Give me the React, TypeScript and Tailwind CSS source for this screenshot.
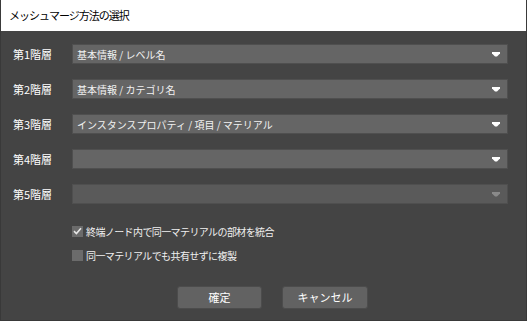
import React from 'react';

const LEVELS = [
  { label: '第1階層', value: '基本情報 / レベル名', disabled: false },
  { label: '第2階層', value: '基本情報 / カテゴリ名', disabled: false },
  { label: '第3階層', value: 'インスタンスプロパティ / 項目 / マテリアル', disabled: false },
  { label: '第4階層', value: '', disabled: false },
  { label: '第5階層', value: '', disabled: true },
];

function Arrow({ disabled }: { disabled: boolean }) {
  return (
    <svg width="8" height="5" viewBox="0 0 8 5" className={disabled ? 'text-[#8a8a8a]' : 'text-white'}>
      <path d="M0 0H8V1.5L5 4.5H3L0 1.5Z" fill="currentColor" />
    </svg>
  );
}

function Checkbox({ checked, label }: { checked: boolean; label: string }) {
  return (
    <div className="flex items-center h-[16px] gap-[3px]">
      <div className="w-[11px] h-[11px] bg-[#6b6b6b] flex items-center justify-center">
        {checked && (
          <svg width="9" height="8" viewBox="0 0 9 8">
            <path d="M1 4.2L3.4 6.5L8 1.2" stroke="#e6e6e6" strokeWidth="1.6" fill="none" />
          </svg>
        )}
      </div>
      <span className="text-[10px] text-[#f0f0f0] tracking-[-0.6px]">{label}</span>
    </div>
  );
}

export default function App() {
  return (
    <div className="w-[527px] h-[321px] flex flex-col" style={{ fontFamily: '"Noto Sans CJK JP", "Noto Sans", sans-serif' }}>
      {/* Title bar */}
      <div className="h-[31px] bg-white flex items-center pl-[8px] border-x border-[#3a3a3a]">
        <span className="text-[11px] tracking-[-1px] text-black">メッシュマージ方法の選択</span>
      </div>

      {/* Body */}
      <div className="flex-1 bg-[#444444] border-x border-b border-[#393939] pt-[13px] flex flex-col">
        <div className="flex flex-col gap-[15px]">
          {LEVELS.map(level => (
            <div key={level.label} className="flex items-center h-[20px]">
              <div className="w-[71px] pl-[12px] text-[11px] text-white">{level.label}</div>
              <div
                className={`w-[436px] h-[20px] flex items-center justify-between pl-[4px] pr-[7px] border border-[#4f4f4f] ${level.disabled ? 'bg-[#5a5a5a]' : 'bg-[#656565]'}`}
              >
                <span className="text-[10px] text-[#f2f2f2]">{level.value}</span>
                <Arrow disabled={level.disabled} />
              </div>
            </div>
          ))}
        </div>

        <div className="mt-[19px] pl-[71px] flex flex-col gap-[8px]">
          <Checkbox checked label="終端ノード内で同一マテリアルの部材を統合" />
          <Checkbox checked={false} label="同一マテリアルでも共有せずに複製" />
        </div>

        <div className="mt-[23px] flex gap-[20px] pl-[176px]">
          <button className="w-[85px] h-[23px] rounded-[3px] bg-[#626262] border border-[#4c4c4c] text-[11px] text-white">確定</button>
          <button className="w-[86px] h-[23px] rounded-[3px] bg-[#626262] border border-[#4c4c4c] text-[11px] text-white">キャンセル</button>
        </div>
      </div>
    </div>
  );
}
